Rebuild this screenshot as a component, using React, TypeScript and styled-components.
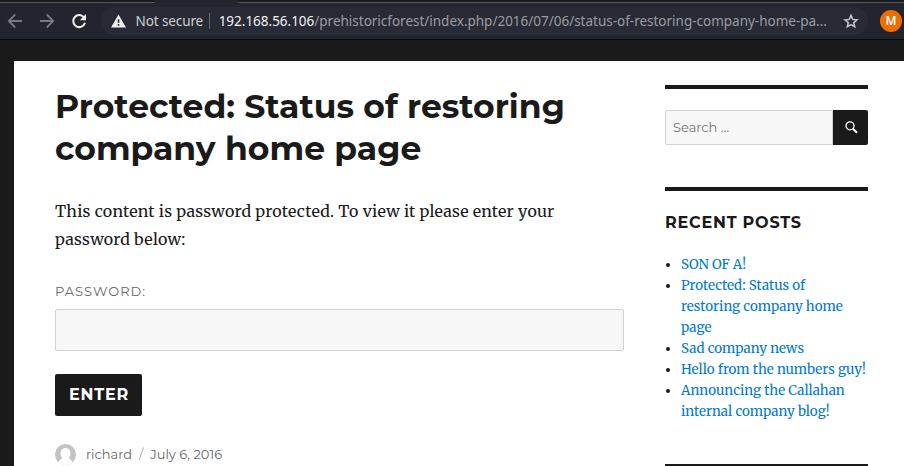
import React from "react";
import styled, { createGlobalStyle } from "styled-components";

const ink = "#1a1a1a";
const sans = '"Montserrat", "Inter", "Liberation Sans", sans-serif';
const serif = '"Merriweather", "DejaVu Serif Condensed", "DejaVu Serif", serif';

const GlobalStyle = createGlobalStyle`
  *, *::before, *::after { box-sizing: border-box; }
  html, body { margin: 0; background: ${ink}; }
  body { overflow: hidden; }
`;

const Window = styled.div`
  width: 904px;
  height: 466px;
  overflow: hidden;
  display: flex;
  flex-direction: column;
  background: ${ink};
`;

const TabStrip = styled.div`
  flex: none;
  height: 3px;
  display: flex;
  justify-content: space-between;
  background: #22252e;
`;

const InactiveTabs = styled.div<{ $side: "left" | "right" }>`
  width: ${(p) => (p.$side === "left" ? "156px" : "667px")};
  background: #18191b;
  border-bottom: 1px solid #58595d;
  border-radius: ${(p) => (p.$side === "left" ? "0 0 3px 0" : "0 0 0 3px")};
`;

const Toolbar = styled.div`
  flex: none;
  height: 37px;
  display: flex;
  align-items: center;
  padding: 0 2px 1px 7px;
  background: #22252e;
  border-bottom: 1px solid #08090c;
`;

const NavButton = styled.button<{ $gap: number; $dim?: boolean }>`
  width: 16px;
  height: 16px;
  margin: 0 ${(p) => p.$gap}px 0 0;
  padding: 0;
  border: 0;
  background: none;
  color: ${(p) => (p.$dim ? "#77797e" : "#eeeeee")};
  svg { display: block; }
`;

const AddressBar = styled.div`
  width: 767px;
  height: 28px;
  margin-right: 12px;
  padding: 0 9px 0 10px;
  display: flex;
  align-items: center;
  border-radius: 14px;
  background: #282a35;
  color: #9a9ca1;
  font: 13.5px/28px "Noto Sans", sans-serif;
  white-space: nowrap;
  svg { flex: none; display: block; }
`;

const Security = styled.span`
  margin-left: 9.5px;
  padding-right: 6px;
  letter-spacing: -0.1px;
  color: #cfcfd1;
`;

const Divider = styled.span`
  width: 1px;
  height: 16px;
  margin-right: 8.5px;
  background: #67696f;
`;

const Url = styled.span`
  flex: 1;
  letter-spacing: -0.01px;
  strong { font-weight: 400; color: #f3f3f3; }
`;

const Profile = styled.span`
  width: 22px;
  height: 22px;
  flex: none;
  border-radius: 50%;
  background: #ee6c00;
  color: #fff;
  text-align: center;
  font: 500 12px/22px Roboto, sans-serif;
`;

const Page = styled.div`
  flex: 1;
  min-height: 0;
  margin: 21px 0 0 14px;
  padding: 24px 36px 0 41px;
  display: flex;
  justify-content: space-between;
  background: #fff;
  color: ${ink};
`;

const Article = styled.main`
  width: 569px;
`;

const Title = styled.h1`
  margin: 0 0 28px;
  font: 700 33px/42px ${sans};
`;

const Line = styled.span`
  display: block;
  white-space: nowrap;
`;

const Intro = styled.p`
  margin: 0 0 28px;
  font: 16px/28px ${serif};
  letter-spacing: 0.225px;
`;

const Label = styled.label`
  display: block;
  height: 28px;
  color: #686868;
  font: 13px/21px ${sans};
  letter-spacing: 1px;
  text-transform: uppercase;
`;

const PasswordInput = styled.input`
  display: block;
  width: 100%;
  height: 42px;
  padding: 0 8px;
  border: 1px solid #d1d1d1;
  border-radius: 2px;
  background: #f7f7f7;
`;

const EnterButton = styled.button`
  display: block;
  width: 87px;
  height: 42px;
  margin: 23px 0 28px;
  padding: 0 0 1px 1px;
  border: 0;
  border-radius: 2px;
  background: ${ink};
  color: #fff;
  font: 700 16px/40px ${sans};
  letter-spacing: 0.75px;
  text-transform: uppercase;
`;

const Meta = styled.footer`
  display: flex;
  align-items: center;
  height: 21px;
  color: #686868;
  font: 13px/21px ${sans};
  white-space: nowrap;
`;

const Author = styled.span`
  margin-left: 10px;
`;

const Slash = styled.span`
  width: 18px;
  text-align: center;
  color: #a0a0a0;
`;

const PostDate = styled.time`
  letter-spacing: 0;
`;

const Sidebar = styled.aside`
  width: 203px;
`;

const Widget = styled.section`
  padding-top: 21px;
  margin-bottom: 42px;
  border-top: 4px solid ${ink};
`;

const SearchForm = styled.form`
  display: flex;
  height: 35px;
`;

const SearchInput = styled.input`
  width: 168px;
  padding: 0 7px 1px;
  border: 1px solid #d1d1d1;
  border-radius: 2px 0 0 2px;
  background: #f7f7f7;
  font: 13px ${sans};
  &::placeholder { color: #757575; opacity: 1; }
`;

const SearchButton = styled.button`
  width: 35px;
  padding: 0 0 0 1px;
  border: 0;
  border-radius: 0 2px 2px 0;
  display: grid;
  place-items: center;
  background: ${ink};
`;

const WidgetTitle = styled.h2`
  margin: 0 0 21px;
  font: 700 16px/21px ${sans};
  letter-spacing: 0.78px;
  text-transform: uppercase;
`;

const PostList = styled.ul`
  margin: 0;
  padding: 0;
`;

const PostItem = styled.li`
  display: flex;
  font: 13.38px/21px ${serif};
  &::before {
    content: "";
    width: 4px;
    height: 4px;
    margin: 9px 11px 0 1px;
    flex: none;
    border-radius: 50%;
    background: ${ink};
  }
`;

const PostLink = styled.a`
  color: #007acc;
  text-decoration: none;
`;

const posts: string[][] = [
  ["SON OF A!"],
  ["Protected: Status of", "restoring company home", "page"],
  ["Sad company news"],
  ["Hello from the numbers guy!"],
  ["Announcing the Callahan", "internal company blog!"],
];

const Arrow = ({ d }: { d: string }) => (
  <svg width="16" height="16" viewBox="0 0 16 16" fill="none" stroke="currentColor" strokeWidth="1.8">
    <path d={d} />
  </svg>
);

export default function App() {
  return (
    <Window>
      <GlobalStyle />
      <TabStrip>
        <InactiveTabs $side="left" />
        <InactiveTabs $side="right" />
      </TabStrip>
      <Toolbar>
        <NavButton $gap={16} $dim aria-label="Back">
          <Arrow d="M15 8H2.2M8.2 1.5 1.8 8l6.4 6.5" />
        </NavButton>
        <NavButton $gap={16} $dim aria-label="Forward">
          <Arrow d="M1 8h12.8M7.8 1.5 14.2 8l-6.4 6.5" />
        </NavButton>
        <NavButton $gap={14} aria-label="Reload">
          <svg width="16" height="16" viewBox="0 0 16 16">
            <path d="M13.2 4.7A6 6 0 1 0 14 9.8" fill="none" stroke="currentColor" strokeWidth="2" />
            <path d="M15 1v6.2H8.8z" fill="currentColor" />
          </svg>
        </NavButton>
        <AddressBar>
          <svg width="15" height="14" viewBox="0 0 15 14">
            <path d="M7.5.5 15 13.5H0z" fill="#eeeeee" />
            <path d="M6.7 5.3h1.6v3.5H6.7zM6.7 10h1.6v1.7H6.7z" fill="#282a35" />
          </svg>
          <Security>Not secure</Security>
          <Divider />
          <Url>
            <strong>192.168.56.106</strong>
            /prehistoricforest/index.php/2016/07/06/status-of-restoring-company-home-pa...
          </Url>
          <svg width="16" height="16" viewBox="0 0 16 16" fill="none" stroke="#c6c7ca" strokeWidth="1.5">
            <path d="m8 2.400 1.700 4 4.300.4-3.300 2.800 1 4.200L8 11.600l-3.700 2.200 1-4.200L2 6.800l4.300-.4z" />
          </svg>
        </AddressBar>
        <Profile>M</Profile>
      </Toolbar>
      <Page>
        <Article>
          <Title>
            <Line>Protected: Status of restoring</Line>
            <Line>company home page</Line>
          </Title>
          <Intro>
            <Line>This content is password protected. To view it please enter your</Line>
            <Line>password below:</Line>
          </Intro>
          <Label htmlFor="password">Password:</Label>
          <PasswordInput id="password" type="password" />
          <EnterButton>Enter</EnterButton>
          <Meta>
            <svg width="21" height="21" viewBox="0 0 21 21">
              <defs>
                <clipPath id="avatar"><circle cx="10.5" cy="10.5" r="10.5" /></clipPath>
              </defs>
              <g clipPath="url(#avatar)">
                <path d="M0 0h21v21H0z" fill="#c3c3c3" />
                <ellipse cx="10.5" cy="9.5" rx="5" ry="5.7" fill="#fff" />
                <path d="M3 21c0-3.500 2-5.500 4.500-7h6c2.500 1.500 4.500 3.500 4.500 7z" fill="#fff" />
              </g>
            </svg>
            <Author>richard</Author>
            <Slash>/</Slash>
            <PostDate>July 6, 2016</PostDate>
          </Meta>
        </Article>
        <Sidebar>
          <Widget>
            <SearchForm>
              <SearchInput placeholder="Search …" />
              <SearchButton type="button" aria-label="Search">
                <svg width="13" height="13" viewBox="0 0 13 13" fill="none" stroke="#fff">
                  <circle cx="5" cy="4.800" r="4" strokeWidth="1.3" />
                  <path d="m7.800 7.600 4.200 4.200" strokeWidth="2" />
                </svg>
              </SearchButton>
            </SearchForm>
          </Widget>
          <Widget>
            <WidgetTitle>Recent Posts</WidgetTitle>
            <PostList>
              {posts.map((lines) => (
                <PostItem key={lines[0]}>
                  <PostLink>
                    {lines.map((line) => (
                      <Line key={line}>{line}</Line>
                    ))}
                  </PostLink>
                </PostItem>
              ))}
            </PostList>
          </Widget>
          <Widget />
        </Sidebar>
      </Page>
    </Window>
  );
}
